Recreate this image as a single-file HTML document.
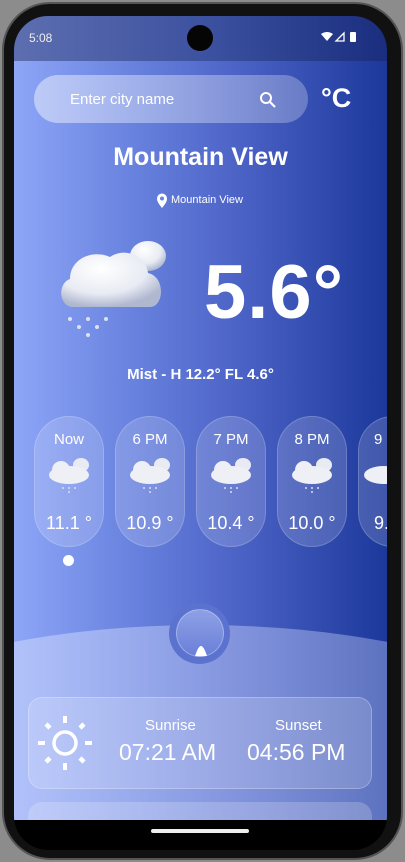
<!DOCTYPE html>
<html><head><style>
*{margin:0;padding:0;box-sizing:border-box}
body{width:405px;height:862px;background:#8c8c8c;position:relative;overflow:hidden;font-family:"Liberation Sans",sans-serif;color:#fff}
.phone{position:absolute;left:2px;top:2px;width:401px;height:858px;background:#111;border-radius:48px;border:2px solid #555}
.screen{position:absolute;left:14px;top:16px;width:373px;height:834px;background:#000;border-radius:34px;overflow:hidden}
.status{position:absolute;left:0;top:0;width:373px;height:45px;background:linear-gradient(90deg,#5d6eb0,#3a4f9e 55%,#1a2d7e)}
.app{position:absolute;left:0;top:45px;width:373px;height:759px;background:linear-gradient(90deg,#8ea6f7 0%,#6a84e0 30%,#4c63c6 60%,#1c389b 100%);overflow:hidden}
.abs{position:absolute}
.card{position:absolute;top:355px;width:70px;height:131px;border-radius:35px;background:rgba(255,255,255,.16);border:1px solid rgba(255,255,255,.18);text-align:center}
.card .t{margin-top:14px;font-size:15px}
.card .v{position:absolute;top:96px;width:100%;font-size:18px}
</style></head><body>
<div class="phone"></div>
<div class="screen">
 <div class="status">
  <div class="abs" style="left:15px;top:15px;font-size:12px;color:#eee">5:08</div>
  <div class="abs" style="left:173px;top:9px;width:26px;height:26px;border-radius:50%;background:#050505"></div>
  <svg class="abs" style="left:306px;top:15px" width="40" height="14"><path d="M1 3 Q7 -1 13 3 L7 10Z" fill="#fff"/><path d="M16 10 L24 2 L24 10Z" fill="none" stroke="#fff" stroke-width="1.3"/><rect x="30" y="1" width="6" height="10" rx="1" fill="#fff"/></svg>
 </div>
 <div class="app">
  <div class="abs" style="left:20px;top:14px;width:274px;height:48px;border-radius:24px;background:linear-gradient(90deg,rgba(255,255,255,.45),rgba(255,255,255,.25))"></div>
  <div class="abs" style="left:56px;top:30px;font-size:15px">Enter city name</div>
  <svg class="abs" style="left:245px;top:30px" width="18" height="18"><circle cx="7" cy="7" r="5" fill="none" stroke="#fff" stroke-width="2"/><path d="M11 11 L16 16" stroke="#fff" stroke-width="2.2"/></svg>
  <div class="abs" style="left:307px;top:22px;font-size:27px;font-weight:bold">°C</div>
  <div class="abs" style="left:0;width:373px;top:82px;text-align:center;font-size:25px;font-weight:bold">Mountain View</div>
  <svg class="abs" style="left:142px;top:132px" width="12" height="16"><path d="M6 15 C2 10 1 8 1 5.5 A5 5 0 0 1 11 5.5 C11 8 10 10 6 15Z" fill="#fff"/><circle cx="6" cy="5.5" r="2" fill="#6a84e0"/></svg>
  <div class="abs" style="left:157px;top:133px;font-size:11px">Mountain View</div>
  <svg class="abs" style="left:44px;top:178px" width="115" height="105">
   <defs><radialGradient id="g" cx="40%" cy="30%" r="70%"><stop offset="0" stop-color="#fff"/><stop offset=".65" stop-color="#e8ebf3"/><stop offset="1" stop-color="#b0b8d0"/></radialGradient></defs>
   <ellipse cx="90" cy="17" rx="18" ry="15" fill="url(#g)"/>
   <path d="M14 68 C0 66 0 44 12 40 C12 20 34 10 52 18 C66 8 88 16 90 34 C108 38 106 68 92 68 Z" fill="url(#g)"/>
   <g fill="#dde2ee"><circle cx="12" cy="80" r="2"/><circle cx="30" cy="80" r="2"/><circle cx="48" cy="80" r="2"/><circle cx="21" cy="88" r="2"/><circle cx="39" cy="88" r="2"/><circle cx="30" cy="96" r="2"/></g>
  </svg>
  <div class="abs" style="left:190px;top:188px;font-size:76px;font-weight:bold;letter-spacing:1px">5.6°</div>
  <div class="abs" style="left:0;width:373px;top:305px;text-align:center;font-size:15px;font-weight:bold">Mist - H 12.2° FL 4.6°</div>
  <div class="card" style="left:20px"><div class="t">Now</div><svg width="44" height="40" style="margin-top:6px"><ellipse cx="34" cy="11" rx="8" ry="7" fill="#e8ebf3"/><ellipse cx="14" cy="16" rx="9" ry="9" fill="#eef0f6"/><ellipse cx="22" cy="21" rx="20" ry="9" fill="#eef0f6"/><g fill="#dde"><circle cx="16" cy="34" r="1"/><circle cx="22" cy="34" r="1"/><circle cx="28" cy="34" r="1"/><circle cx="22" cy="38" r="1"/></g></svg><div class="v">11.1 °</div></div>
  <div class="card" style="left:101px"><div class="t">6 PM</div><svg width="44" height="40" style="margin-top:6px"><ellipse cx="34" cy="11" rx="8" ry="7" fill="#e8ebf3"/><ellipse cx="14" cy="16" rx="9" ry="9" fill="#eef0f6"/><ellipse cx="22" cy="21" rx="20" ry="9" fill="#eef0f6"/><g fill="#dde"><circle cx="16" cy="34" r="1"/><circle cx="22" cy="34" r="1"/><circle cx="28" cy="34" r="1"/><circle cx="22" cy="38" r="1"/></g></svg><div class="v">10.9 °</div></div>
  <div class="card" style="left:182px"><div class="t">7 PM</div><svg width="44" height="40" style="margin-top:6px"><ellipse cx="34" cy="11" rx="8" ry="7" fill="#e8ebf3"/><ellipse cx="14" cy="16" rx="9" ry="9" fill="#eef0f6"/><ellipse cx="22" cy="21" rx="20" ry="9" fill="#eef0f6"/><g fill="#dde"><circle cx="16" cy="34" r="1"/><circle cx="22" cy="34" r="1"/><circle cx="28" cy="34" r="1"/><circle cx="22" cy="38" r="1"/></g></svg><div class="v">10.4 °</div></div>
  <div class="card" style="left:263px"><div class="t">8 PM</div><svg width="44" height="40" style="margin-top:6px"><ellipse cx="34" cy="11" rx="8" ry="7" fill="#e8ebf3"/><ellipse cx="14" cy="16" rx="9" ry="9" fill="#eef0f6"/><ellipse cx="22" cy="21" rx="20" ry="9" fill="#eef0f6"/><g fill="#dde"><circle cx="16" cy="34" r="1"/><circle cx="22" cy="34" r="1"/><circle cx="28" cy="34" r="1"/><circle cx="22" cy="38" r="1"/></g></svg><div class="v">10.0 °</div></div>
  <div class="card" style="left:344px;text-align:left;padding-left:15px"><div class="t">9 PM</div><svg width="44" height="40" style="margin-top:6px;margin-left:-12px"><ellipse cx="34" cy="11" rx="8" ry="7" fill="#e8ebf3"/><ellipse cx="22" cy="21" rx="20" ry="9" fill="#eef0f6"/></svg><div class="v" style="left:15px;text-align:left">9.8 °</div></div>
  <div class="abs" style="left:49px;top:494px;width:11px;height:11px;border-radius:50%;background:#fff"></div>
  <div class="abs" style="left:-330px;top:564px;width:1033px;height:500px;border-radius:50%;background:linear-gradient(90deg,rgba(210,220,255,.75),rgba(200,210,250,.45) 50%,rgba(170,185,235,.3))"></div>
  <div class="abs" style="left:155px;top:542px;width:61px;height:61px;border-radius:50%;background:#5b72cf"></div>
  <div class="abs" style="left:162px;top:548px;width:48px;height:48px;border-radius:50%;background:linear-gradient(180deg,#8ea0e6,#6a80d8);border:1px solid rgba(255,255,255,.3)"></div>
  <svg class="abs" style="left:180px;top:584px" width="14" height="12"><path d="M1 11 C3 5 5 1 7 1 C9 1 11 5 13 11Z" fill="#fff"/></svg>
  <div class="abs" style="left:14px;top:636px;width:344px;height:92px;border-radius:14px;background:rgba(255,255,255,.16);border:1px solid rgba(255,255,255,.25)"></div>
  <svg class="abs" style="left:23px;top:654px" width="56" height="56"><circle cx="28" cy="28" r="11" fill="none" stroke="#fff" stroke-width="3.5"/><g stroke="#fff" stroke-width="4"><path d="M28 1v7M28 48v7M1 28h7M48 28h7"/><path d="M9 9l4 4M43 43l4 4M9 47l4-4M43 13l4-4" stroke-width="4.5"/></g></svg>
  <div class="abs" style="left:131px;top:656px;font-size:15px">Sunrise</div>
  <div class="abs" style="left:105px;top:678px;font-size:23px">07:21 AM</div>
  <div class="abs" style="left:261px;top:656px;font-size:15px">Sunset</div>
  <div class="abs" style="left:233px;top:678px;font-size:23px">04:56 PM</div>
  <div class="abs" style="left:14px;top:741px;width:344px;height:60px;border-radius:14px;background:rgba(255,255,255,.2)"></div>
 </div>
 <div class="abs" style="left:137px;top:813px;width:98px;height:4px;border-radius:2px;background:#eee"></div>
</div>
</body></html>
